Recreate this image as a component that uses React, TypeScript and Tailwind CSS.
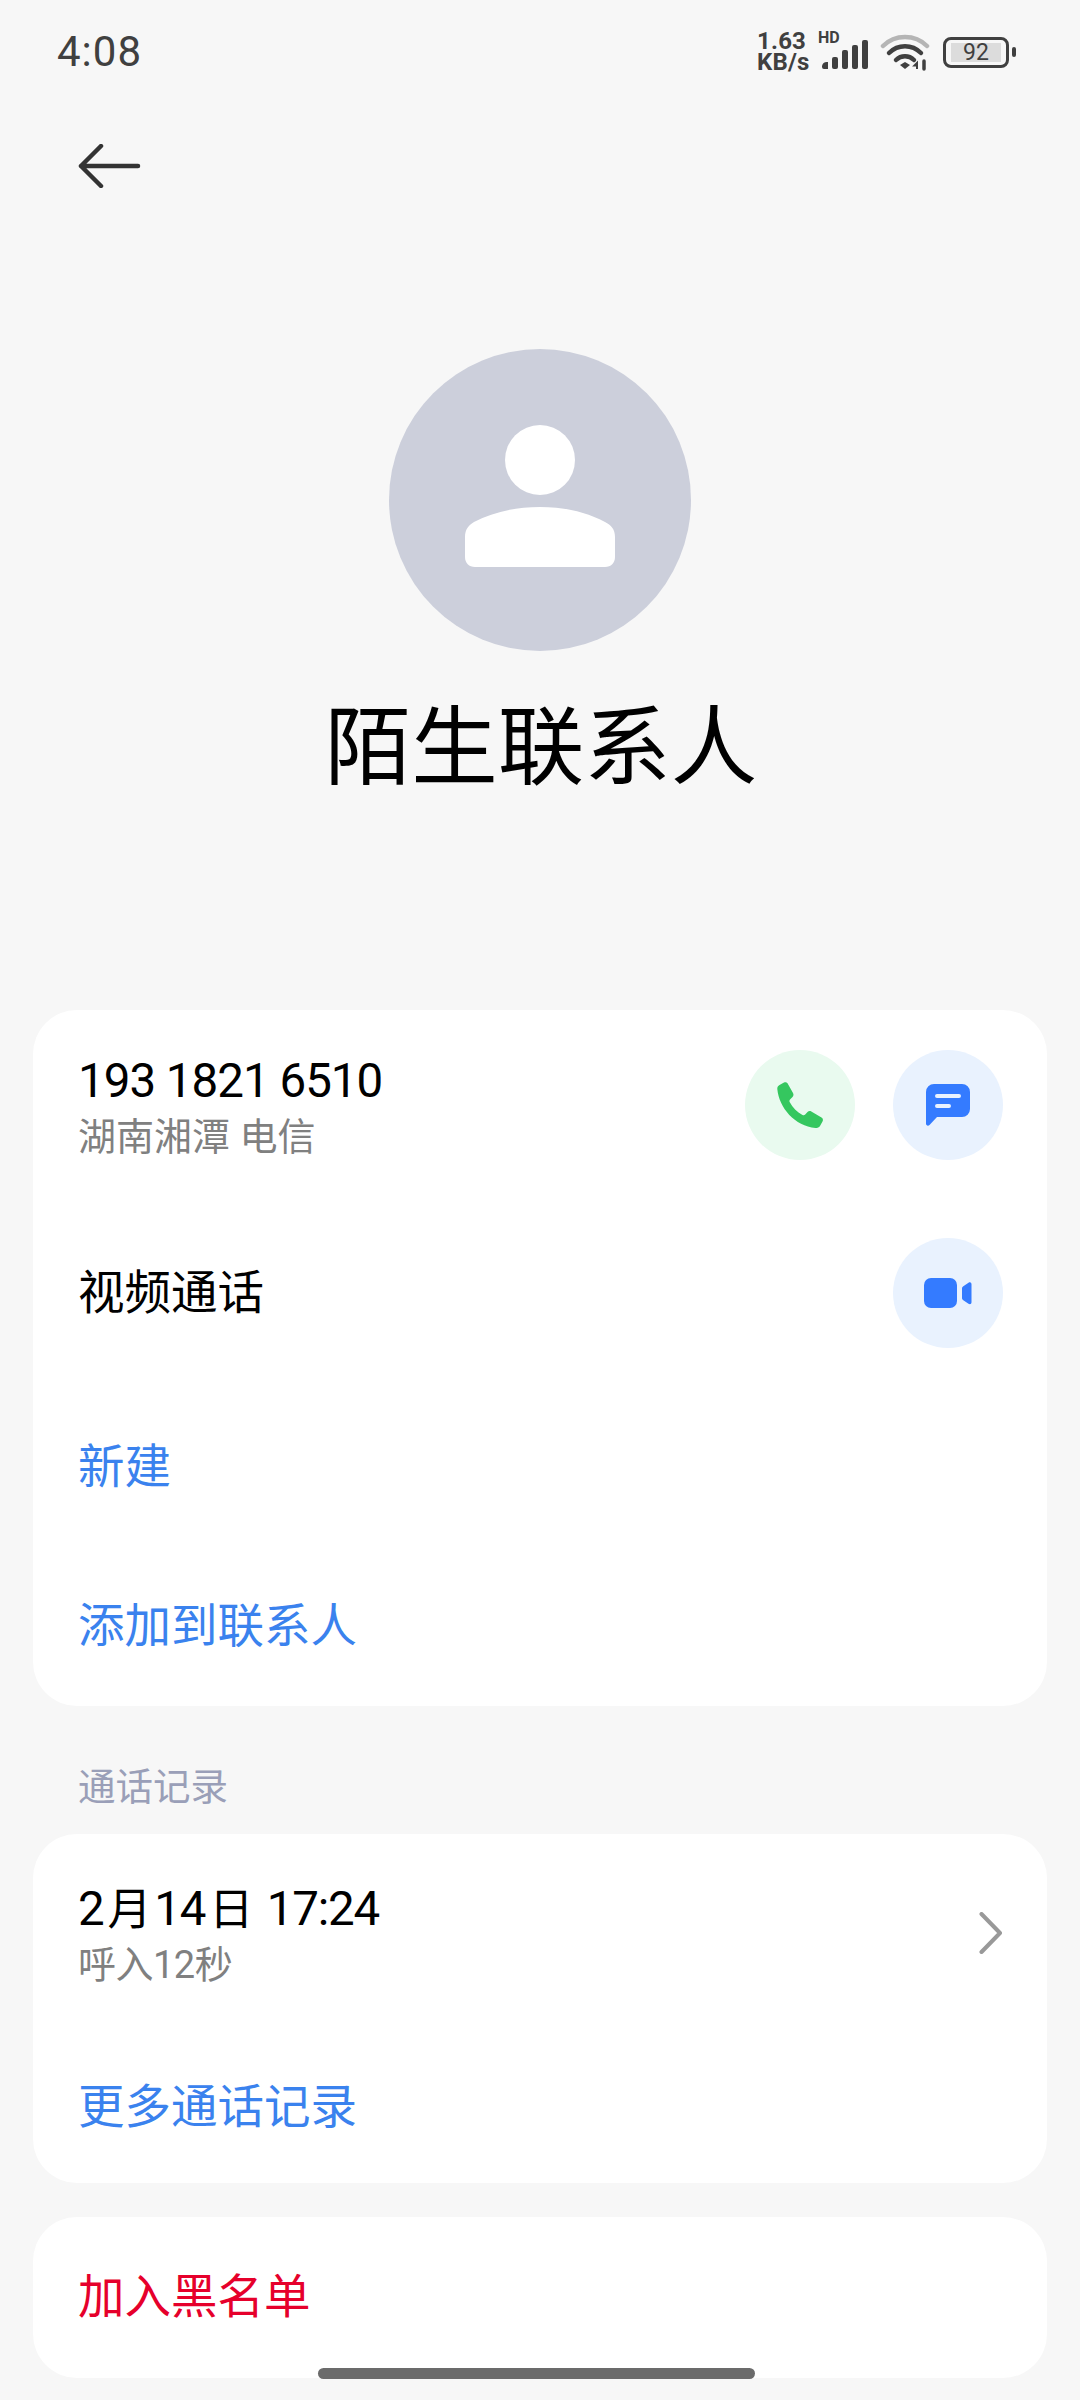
const font = "font-['Roboto','Noto_Sans_CJK_SC',sans-serif]";

const StatusBar = () => (
  <div className="flex h-[104px] items-center justify-between pl-[57px] pr-[64px]">
    <span className="text-[42px] leading-none tracking-[1px] text-[#404040]">4:08</span>
    <div className="flex items-center text-[#404040]">
      <div className="w-[57px] text-[24px] font-bold leading-[21px] tracking-[0.2px]">
        1.63
        <br />
        KB/s
      </div>
      <div className="relative ml-[8px] h-[36px] w-[48px]">
        <span className="absolute left-[-4px] top-[-4px] text-[16px] font-bold leading-none">HD</span>
        <svg width="48" height="36" viewBox="0 0 48 36" className="absolute left-0 top-0" fill="#404040">
          <path d="M0 32a5 5 0 0 1 5-4h1v7H2a2 2 0 0 1-2-2z" />
          <rect x="10" y="23" width="6" height="12" rx="2" />
          <rect x="20" y="16" width="6" height="19" rx="2" />
          <rect x="30" y="11" width="6" height="24" rx="2" />
          <rect x="40" y="6" width="6" height="29" rx="2" />
        </svg>
      </div>
      <svg width="50" height="38" viewBox="0 0 50 38" className="ml-[10px]" fill="none" strokeLinecap="round">
        <path d="M3 13C15 1 35 1 47 13" stroke="#b5b5b5" strokeWidth="4.500" />
        <path d="M9 20C18 11 32 11 41 20" stroke="#404040" strokeWidth="4.500" />
        <path d="M16 27C21 22 29 22 34 27" stroke="#404040" strokeWidth="4.500" />
        <path d="M20 32l5-3 5 3-5 4z" fill="#404040" />
        <path d="M37 36v-6l-2.500 2.500h2.500z" stroke="#404040" strokeWidth="2" />
        <path d="M44 36v-8" stroke="#404040" strokeWidth="3.500" />
      </svg>
      <div className="ml-[13px] flex items-center">
        <div className="flex h-[31px] w-[66px] items-center rounded-[8px] border-[3px] border-[#404040] px-[5px]">
          <div className="flex h-[19px] w-full items-center justify-center bg-[#dcdcdc] text-[23px] leading-none">92</div>
        </div>
        <div className="ml-[3px] h-[10px] w-[4px] rounded-full bg-[#404040]" />
      </div>
    </div>
  </div>
);

const BackArrow = () => (
  <div className="flex h-[124px] items-center pl-[78px]">
    <svg width="64" height="44" viewBox="0 0 64 44" fill="none" stroke="#333333" strokeWidth="4.500" strokeLinecap="round" strokeLinejoin="round">
      <path d="M3 22H60M23 2L3 22L23 42" />
    </svg>
  </div>
);

const CircleButton = ({ tone, children }: { tone: string; children: React.ReactNode }) => (
  <div className={`flex h-[110px] w-[110px] items-center justify-center rounded-full ${tone}`}>{children}</div>
);

const PhoneIcon = () => (
  <svg width="46" height="46" viewBox="0 0 46 46" fill="#35c75f">
    <path d="M0.3 7C0.2 5 1 4 2.500 3L7 0.600C8.500 -0.100 10 0.300 10.800 1.800L16 11C16.800 12.500 16.500 14 15.500 15L13 17.500C12.300 18.300 12.300 19.300 12.800 20.200C15.500 25.500 20 30 25.500 33C26.500 33.500 27.500 33.400 28.200 32.600L30.500 30C31.500 29 33 28.800 34.300 29.500L44.500 35.500C46 36.400 46.300 38 45.500 39.500L43 44C42 45.600 40.500 46 38.500 46C18 44 2 26 0.300 7Z" />
  </svg>
);

const MessageIcon = () => (
  <svg width="44" height="42" viewBox="0 0 44 42" fill="none">
    <path d="M8 0H36a8 8 0 0 1 8 8V25a8 8 0 0 1-8 8H11L3.500 41C2 42.500 0 41.500 0 39.500V8a8 8 0 0 1 8-8Z" fill="#347bff" />
    <path d="M11 12H33M11 22H23" stroke="#e9f2fe" strokeWidth="4" strokeLinecap="round" />
  </svg>
);

const VideoIcon = () => (
  <svg width="48" height="30" viewBox="0 0 48 30" fill="#347bff">
    <rect x="0" y="0" width="33" height="30" rx="7" />
    <path d="M38 10.500C38 9.500 38.500 8.800 39.300 8.300L44.500 4.800C46 3.800 47.500 4.500 47.500 6.300V24.200C47.500 26 46 26.700 44.500 25.700L39.300 22.200C38.500 21.700 38 21 38 20Z" />
  </svg>
);

const LinkRow = ({ label, height, color = 'text-[#3a82ee]' }: { label: string; height: string; color?: string }) => (
  <div className={`flex items-center pl-[45px] text-[46.500px] leading-none ${height} ${color}`}>{label}</div>
);

export default function App() {
  return (
    <div className={`relative h-[2400px] w-[1080px] overflow-hidden bg-[#f7f7f7] ${font}`}>
      <StatusBar />
      <BackArrow />

      <div className="mt-[121px] flex flex-col items-center">
        <div className="flex h-[302px] w-[302px] items-center justify-center rounded-full bg-[#cccfdb]">
          <svg width="150" height="142" viewBox="0 0 150 142" fill="#ffffff" className="mb-[8px]">
            <circle cx="75" cy="35" r="35" />
            <path d="M0 112C0 104 4 100 9 97C28 87 50 82 75 82C100 82 121 87 140 97C146 100 150 104 150 112V132C150 138 146 142 140 142H10C4 142 0 138 0 132Z" />
          </svg>
        </div>
        <h1 className="mt-[55px] pl-[2px] text-[86.500px] font-normal leading-[86px] text-black">陌生联系人</h1>
      </div>

      <div className="mx-[33px] mt-[218px] rounded-[44px] bg-white">
        <div className="flex h-[189px] items-center justify-between px-[44px]">
          <div className="flex flex-col pt-[6px]">
            <span className="pl-[1px] text-[47.500px] leading-[54px] tracking-[-1px] text-black">193 1821 6510</span>
            <span className="mt-[5px] pl-[1px] text-[38px] leading-[48px] text-[#808080]">湖南湘潭 电信</span>
          </div>
          <div className="flex gap-[38px]">
            <CircleButton tone="bg-[#e9faef]">
              <PhoneIcon />
            </CircleButton>
            <CircleButton tone="bg-[#e9f2fe]">
              <MessageIcon />
            </CircleButton>
          </div>
        </div>
        <div className="flex h-[188px] items-center justify-between px-[44px]">
          <span className="pl-[1px] text-[46.500px] leading-none text-black">视频通话</span>
          <CircleButton tone="bg-[#e9f2fe]">
            <VideoIcon />
          </CircleButton>
        </div>
        <LinkRow label="新建" height="h-[160px]" />
        <LinkRow label="添加到联系人" height="h-[159px]" />
      </div>

      <div className="flex h-[128px] items-end pb-[28px] pl-[78px] text-[37.500px] leading-none text-[#9a9fb8]">通话记录</div>

      <div className="mx-[33px] rounded-[44px] bg-white">
        <div className="flex h-[197px] items-center justify-between pl-[45px] pr-[44px]">
          <div className="flex flex-col pt-[4px]">
            <span className="text-[47.500px] leading-[54px] tracking-[-1.200px] text-black">
              2<span className="mx-[4px] text-[44px]">月</span>14<span className="mx-[4px] text-[44px]">日</span> 17:24
            </span>
            <span className="mt-[5px] text-[38px] leading-[46px] tracking-[-0.5px] text-[#808080]">呼入12秒</span>
          </div>
          <svg width="24" height="42" viewBox="0 0 24 42" fill="none" stroke="#999999" strokeWidth="4" strokeLinecap="round" strokeLinejoin="round">
            <path d="M2.500 2L21 21L2.500 40" />
          </svg>
        </div>
        <LinkRow label="更多通话记录" height="h-[152px]" />
      </div>

      <div className="mx-[33px] mt-[34px] rounded-[44px] bg-white">
        <LinkRow label="加入黑名单" height="h-[161px]" color="text-[#e6002b]" />
      </div>

      <div className="absolute left-[318px] top-[2368px] h-[11px] w-[437px] rounded-full bg-[#6b6b6b]" />
    </div>
  );
}
